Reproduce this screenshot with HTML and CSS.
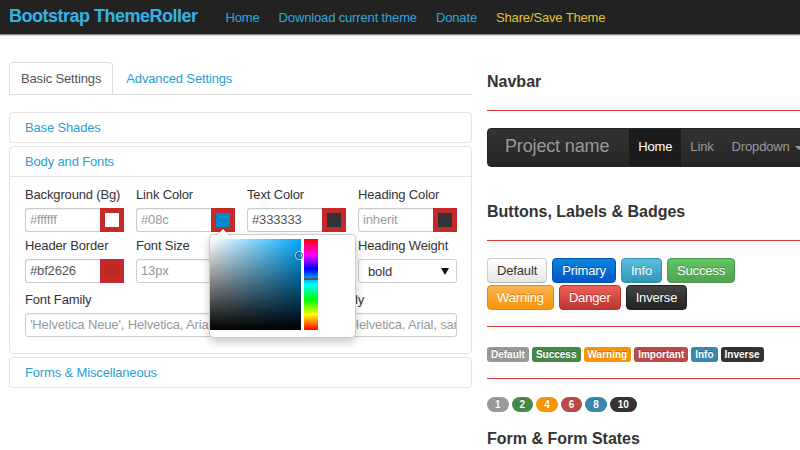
FILE: index.html
```html
<!DOCTYPE html>
<html lang="en">
<head>
<meta charset="utf-8">
<title>Bootstrap ThemeRoller</title>
<link rel="stylesheet" href="styles.css">
</head>
<body>
<header class="topbar">
  <a class="brand">Bootstrap ThemeRoller</a>
  <nav class="toplinks">
    <a>Home</a>
    <a>Download current theme</a>
    <a>Donate</a>
    <a class="share">Share/Save Theme</a>
  </nav>
</header>

<main class="layout">
  <section class="settings">
    <ul class="tabs">
      <li class="tab active">Basic Settings</li>
      <li class="tab">Advanced Settings</li>
    </ul>

    <div class="panels">
      <div class="panel"><div class="panel-head">Base Shades</div></div>

      <div class="panel panel-open">
        <div class="panel-head">Body and Fonts</div>
        <div class="panel-body">
          <div class="fields">
            <div class="field">
              <div class="lab">Background (Bg)</div>
              <div class="ig"><div class="inp">#ffffff</div><div class="sw"><i class="c-white"></i></div></div>
            </div>
            <div class="field">
              <div class="lab">Link Color</div>
              <div class="ig">
                <div class="inp">#08c</div><div class="sw"><i class="c-blue"></i></div>
                <div class="picker">
                  <div class="sat"><span class="ring"></span></div>
                  <div class="hue"><span class="hue-line"></span></div>
                </div>
              </div>
            </div>
            <div class="field">
              <div class="lab">Text Color</div>
              <div class="ig"><div class="inp val">#333333</div><div class="sw"><i class="c-dark"></i></div></div>
            </div>
            <div class="field">
              <div class="lab">Heading Color</div>
              <div class="ig"><div class="inp">inherit</div><div class="sw"><i class="c-dark"></i></div></div>
            </div>

            <div class="field">
              <div class="lab">Header Border</div>
              <div class="ig"><div class="inp val">#bf2626</div><div class="sw"><i class="c-red"></i></div></div>
            </div>
            <div class="field">
              <div class="lab">Font Size</div>
              <div class="ig"><div class="inp full">13px</div></div>
            </div>
            <div class="field">
              <div class="lab">Heading Font Size</div>
              <div class="ig"><div class="inp full">inherit</div></div>
            </div>
            <div class="field">
              <div class="lab">Heading Weight</div>
              <div class="select"><span>bold</span><span class="tri"></span></div>
            </div>

            <div class="field wide">
              <div class="lab">Font Family</div>
              <div class="ig"><div class="inp full">'Helvetica Neue', Helvetica, Arial, sans-serif</div></div>
            </div>
            <div class="field wide">
              <div class="lab">Heading Font Family</div>
              <div class="ig"><div class="inp full">'Helvetica Neue', Helvetica, Arial, sans-serif</div></div>
            </div>
          </div>
        </div>
      </div>

      <div class="panel"><div class="panel-head">Forms &amp; Miscellaneous</div></div>
    </div>
  </section>

  <section class="preview">
    <h3 class="pv-title first">Navbar</h3>
    <div class="pv-rule"></div>
    <div class="demo-nav">
      <span class="demo-brand">Project name</span>
      <a class="active">Home</a>
      <a>Link</a>
      <a>Dropdown <span class="caret"></span></a>
    </div>

    <h3 class="pv-title">Buttons, Labels &amp; Badges</h3>
    <div class="pv-rule"></div>
    <div class="btns">
      <span class="btn b-default">Default</span>
      <span class="btn b-primary">Primary</span>
      <span class="btn b-info">Info</span>
      <span class="btn b-success">Success</span>
      <span class="btn b-warning">Warning</span>
      <span class="btn b-danger">Danger</span>
      <span class="btn b-inverse">Inverse</span>
    </div>
    <div class="pv-rule r-btns"></div>
    <div class="labels">
      <span class="lbl k-default">Default</span>
      <span class="lbl k-success">Success</span>
      <span class="lbl k-warning">Warning</span>
      <span class="lbl k-important">Important</span>
      <span class="lbl k-info">Info</span>
      <span class="lbl k-inverse">Inverse</span>
    </div>
    <div class="pv-rule r-labels"></div>
    <div class="badges">
      <span class="badge k-default">1</span>
      <span class="badge k-success">2</span>
      <span class="badge k-warning">4</span>
      <span class="badge k-important">6</span>
      <span class="badge k-info">8</span>
      <span class="badge k-inverse">10</span>
    </div>
    <h3 class="pv-title t-form">Form &amp; Form States</h3>
  </section>
</main>
</body>
</html>
```
FILE: styles.css
```css
html, body {
  margin: 0;
  padding: 0;
  overflow: hidden;
  background: #fff;
}
body {
  width: 800px;
  height: 450px;
  font-family: "Liberation Sans", Arial, sans-serif;
  font-size: 13px;
  letter-spacing: -0.15px;
  color: #333;
}

/* top bar */
.topbar {
  height: 34px;
  background: #222;
  border-bottom: 1px solid #8c8c8c;
  box-shadow: 0 1px 0 #d6d6d6;
  display: flex;
  align-items: center;
  padding: 0 9px;
}
.brand {
  font-size: 18px;
  font-weight: bold;
  color: #35b4e4;
  letter-spacing: -0.5px;
  margin-top: -2px;
}
.toplinks {
  display: flex;
  gap: 19px;
  margin-left: 28px;
}
.toplinks a { color: #2fa6dc; }
.toplinks a.share { color: #e0c33f; }

/* layout */
.layout {
  display: grid;
  grid-template-columns: 463px 340px;
  column-gap: 15px;
  padding: 0 9px;
}

/* tabs */
.tabs {
  list-style: none;
  margin: 27px 0 0;
  padding: 0;
  display: flex;
  border-bottom: 1px solid #ddd;
}
.tab {
  padding: 0 11px;
  line-height: 31px;
  border: 1px solid transparent;
  border-bottom: 0;
  border-radius: 4px 4px 0 0;
  color: #2a9fd6;
  margin-right: 1px;
}
.tab.active {
  border-color: #ddd;
  color: #555;
}

/* accordion */
.panels { margin-top: 17px; }
.panel {
  border: 1px solid #e5e5e5;
  border-radius: 4px;
  margin-bottom: 3px;
}
.panel-head {
  padding: 0 15px;
  line-height: 29px;
  color: #2a9fd6;
}
.panel-open .panel-head { border-bottom: 1px solid #e5e5e5; }
.panel-body { padding: 8px 14px 16px 15px; }

.fields {
  display: grid;
  grid-template-columns: repeat(4, minmax(0, 1fr));
  column-gap: 12px;
  row-gap: 4px;
}
.field { min-width: 0; }
.field.wide { grid-column: span 2; margin-top: 3px; }
.lab {
  line-height: 18px;
  padding-top: 1px;
  margin-bottom: 4px;
  white-space: nowrap;
}
.ig {
  display: flex;
  height: 24px;
  position: relative;
}
.inp {
  flex: 1;
  min-width: 0;
  box-sizing: border-box;
  height: 24px;
  border: 1px solid #ccc;
  border-right: 0;
  border-radius: 3px 0 0 3px;
  padding: 0 4px;
  line-height: 22px;
  color: #999;
  white-space: nowrap;
  overflow: hidden;
  box-shadow: inset 0 1px 1px rgba(0,0,0,0.06);
}
.inp.val { color: #555; }
.inp.full { border-right: 1px solid #ccc; border-radius: 3px; }
.sw {
  width: 24px;
  height: 24px;
  box-sizing: border-box;
  padding: 5px;
  background: #c42a2a;
}
.sw i { display: block; width: 14px; height: 14px; }
.c-white { background: #fff; }
.c-blue { background: #0088cc; }
.c-dark { background: #333; }
.c-red { background: #bf2626; }

.select {
  height: 24px;
  box-sizing: border-box;
  border: 1px solid #ccc;
  border-radius: 3px;
  padding: 1px 7px 0 9px;
  display: flex;
  align-items: center;
  justify-content: space-between;
  color: #333;
  background: #fff;
}
.tri {
  width: 0;
  height: 0;
  border-left: 4px solid transparent;
  border-right: 4px solid transparent;
  border-top: 7px solid #111;
}

/* color picker popup */
.picker {
  position: absolute;
  left: 73px;
  top: 26px;
  z-index: 5;
  width: 147px;
  height: 104px;
  box-sizing: border-box;
  padding: 4px 0 0 0;
  background: #fff;
  border: 1px solid rgba(0,0,0,0.2);
  border-radius: 5px;
  box-shadow: 0 4px 10px rgba(0,0,0,0.22);
  display: flex;
  gap: 3px;
}
.picker::before {
  content: "";
  position: absolute;
  left: 6px;
  top: -7px;
  border-left: 7px solid transparent;
  border-right: 7px solid transparent;
  border-bottom: 7px solid rgba(0,0,0,0.2);
}
.picker::after {
  content: "";
  position: absolute;
  left: 7px;
  top: -6px;
  border-left: 6px solid transparent;
  border-right: 6px solid transparent;
  border-bottom: 6px solid #fff;
}
.sat {
  position: relative;
  width: 91px;
  height: 91px;
  background:
    linear-gradient(to top, #000, rgba(0,0,0,0)),
    linear-gradient(to right, #fff, #00aaff);
}
.ring {
  position: absolute;
  left: 86px;
  top: 13px;
  width: 5px;
  height: 5px;
  border: 1px solid #444;
  border-radius: 50%;
  box-shadow: 0 0 0 1px rgba(255,255,255,0.6);
}
.hue {
  position: relative;
  width: 14px;
  height: 91px;
  background: linear-gradient(to bottom, #f00 0%, #f0f 17%, #00f 33%, #0ff 50%, #0f0 67%, #ff0 83%, #f00 100%);
}
.hue-line {
  position: absolute;
  left: 0;
  top: 39px;
  width: 14px;
  height: 2px;
  background: #555;
}

/* preview column */
.preview { min-width: 0; }
.pv-title {
  margin: 35px 0 0;
  font-size: 16px;
  font-weight: bold;
  line-height: 20px;
  letter-spacing: 0;
  color: #333;
}
.pv-title.first { margin-top: 37px; }
.pv-title.t-form { margin-top: 17px; }
.pv-rule {
  height: 1px;
  margin-top: 18px;
  background: #d23e3e;
  border-bottom: 1px solid #fff;
}
.pv-rule.r-btns, .pv-rule.r-labels { margin-top: 16px; }

.demo-nav {
  margin-top: 16px;
  height: 39px;
  width: 340px;
  box-sizing: border-box;
  border: 1px solid #252525;
  border-radius: 4px;
  background: linear-gradient(#333, #262626);
  display: flex;
  align-items: stretch;
  white-space: nowrap;
}
.demo-brand {
  padding: 0 20px 0 17px;
  font-size: 18px;
  line-height: 35px;
  color: #999;
}
.demo-nav a {
  padding: 0 9px;
  line-height: 36px;
  color: #999;
}
.demo-nav a.active {
  background: #1c1c1c;
  color: #fff;
}
.caret {
  display: inline-block;
  width: 0;
  height: 0;
  margin-left: 2px;
  vertical-align: middle;
  border-left: 4px solid transparent;
  border-right: 4px solid transparent;
  border-top: 4px solid #999;
}

.btns {
  display: flex;
  flex-wrap: wrap;
  gap: 2px 5px;
  width: 300px;
  margin-top: 16px;
}
.btn {
  height: 25px;
  box-sizing: border-box;
  padding: 0 9px;
  line-height: 23px;
  border: 1px solid;
  border-radius: 4px;
  color: #fff;
  text-shadow: 0 -1px 0 rgba(0,0,0,0.25);
}
.b-default { background: linear-gradient(#fff, #e6e6e6); border-color: #ccc #ccc #b3b3b3; color: #333; text-shadow: 0 1px 1px rgba(255,255,255,0.75); }
.b-primary { background: linear-gradient(#0a84dd, #0057c6); border-color: #0052b4; }
.b-info { background: linear-gradient(#5bc0de, #2f96b4); border-color: #2f8fad; }
.b-success { background: linear-gradient(#62c462, #51a351); border-color: #4a9a4a; }
.b-warning { background: linear-gradient(#fbb450, #f89406); border-color: #e88a05; }
.b-danger { background: linear-gradient(#ee5f5b, #bd362f); border-color: #b3332d; }
.b-inverse { background: linear-gradient(#444, #222); border-color: #1f1f1f; }

.labels, .badges {
  display: flex;
  gap: 3px;
}
.labels { margin-top: 19px; }
.badges { margin-top: 17px; }
.lbl, .badge {
  font-size: 10px;
  font-weight: bold;
  line-height: 11px;
  letter-spacing: 0;
  color: #fff;
  text-shadow: 0 -1px 0 rgba(0,0,0,0.25);
}
.lbl { padding: 2px 4px; border-radius: 3px; }
.badge { padding: 2px 8px; border-radius: 9px; }
.k-default { background: #999; }
.k-success { background: #468847; }
.k-warning { background: #f89406; }
.k-important { background: #b94a48; }
.k-info { background: #3a87ad; }
.k-inverse { background: #333; }
```
